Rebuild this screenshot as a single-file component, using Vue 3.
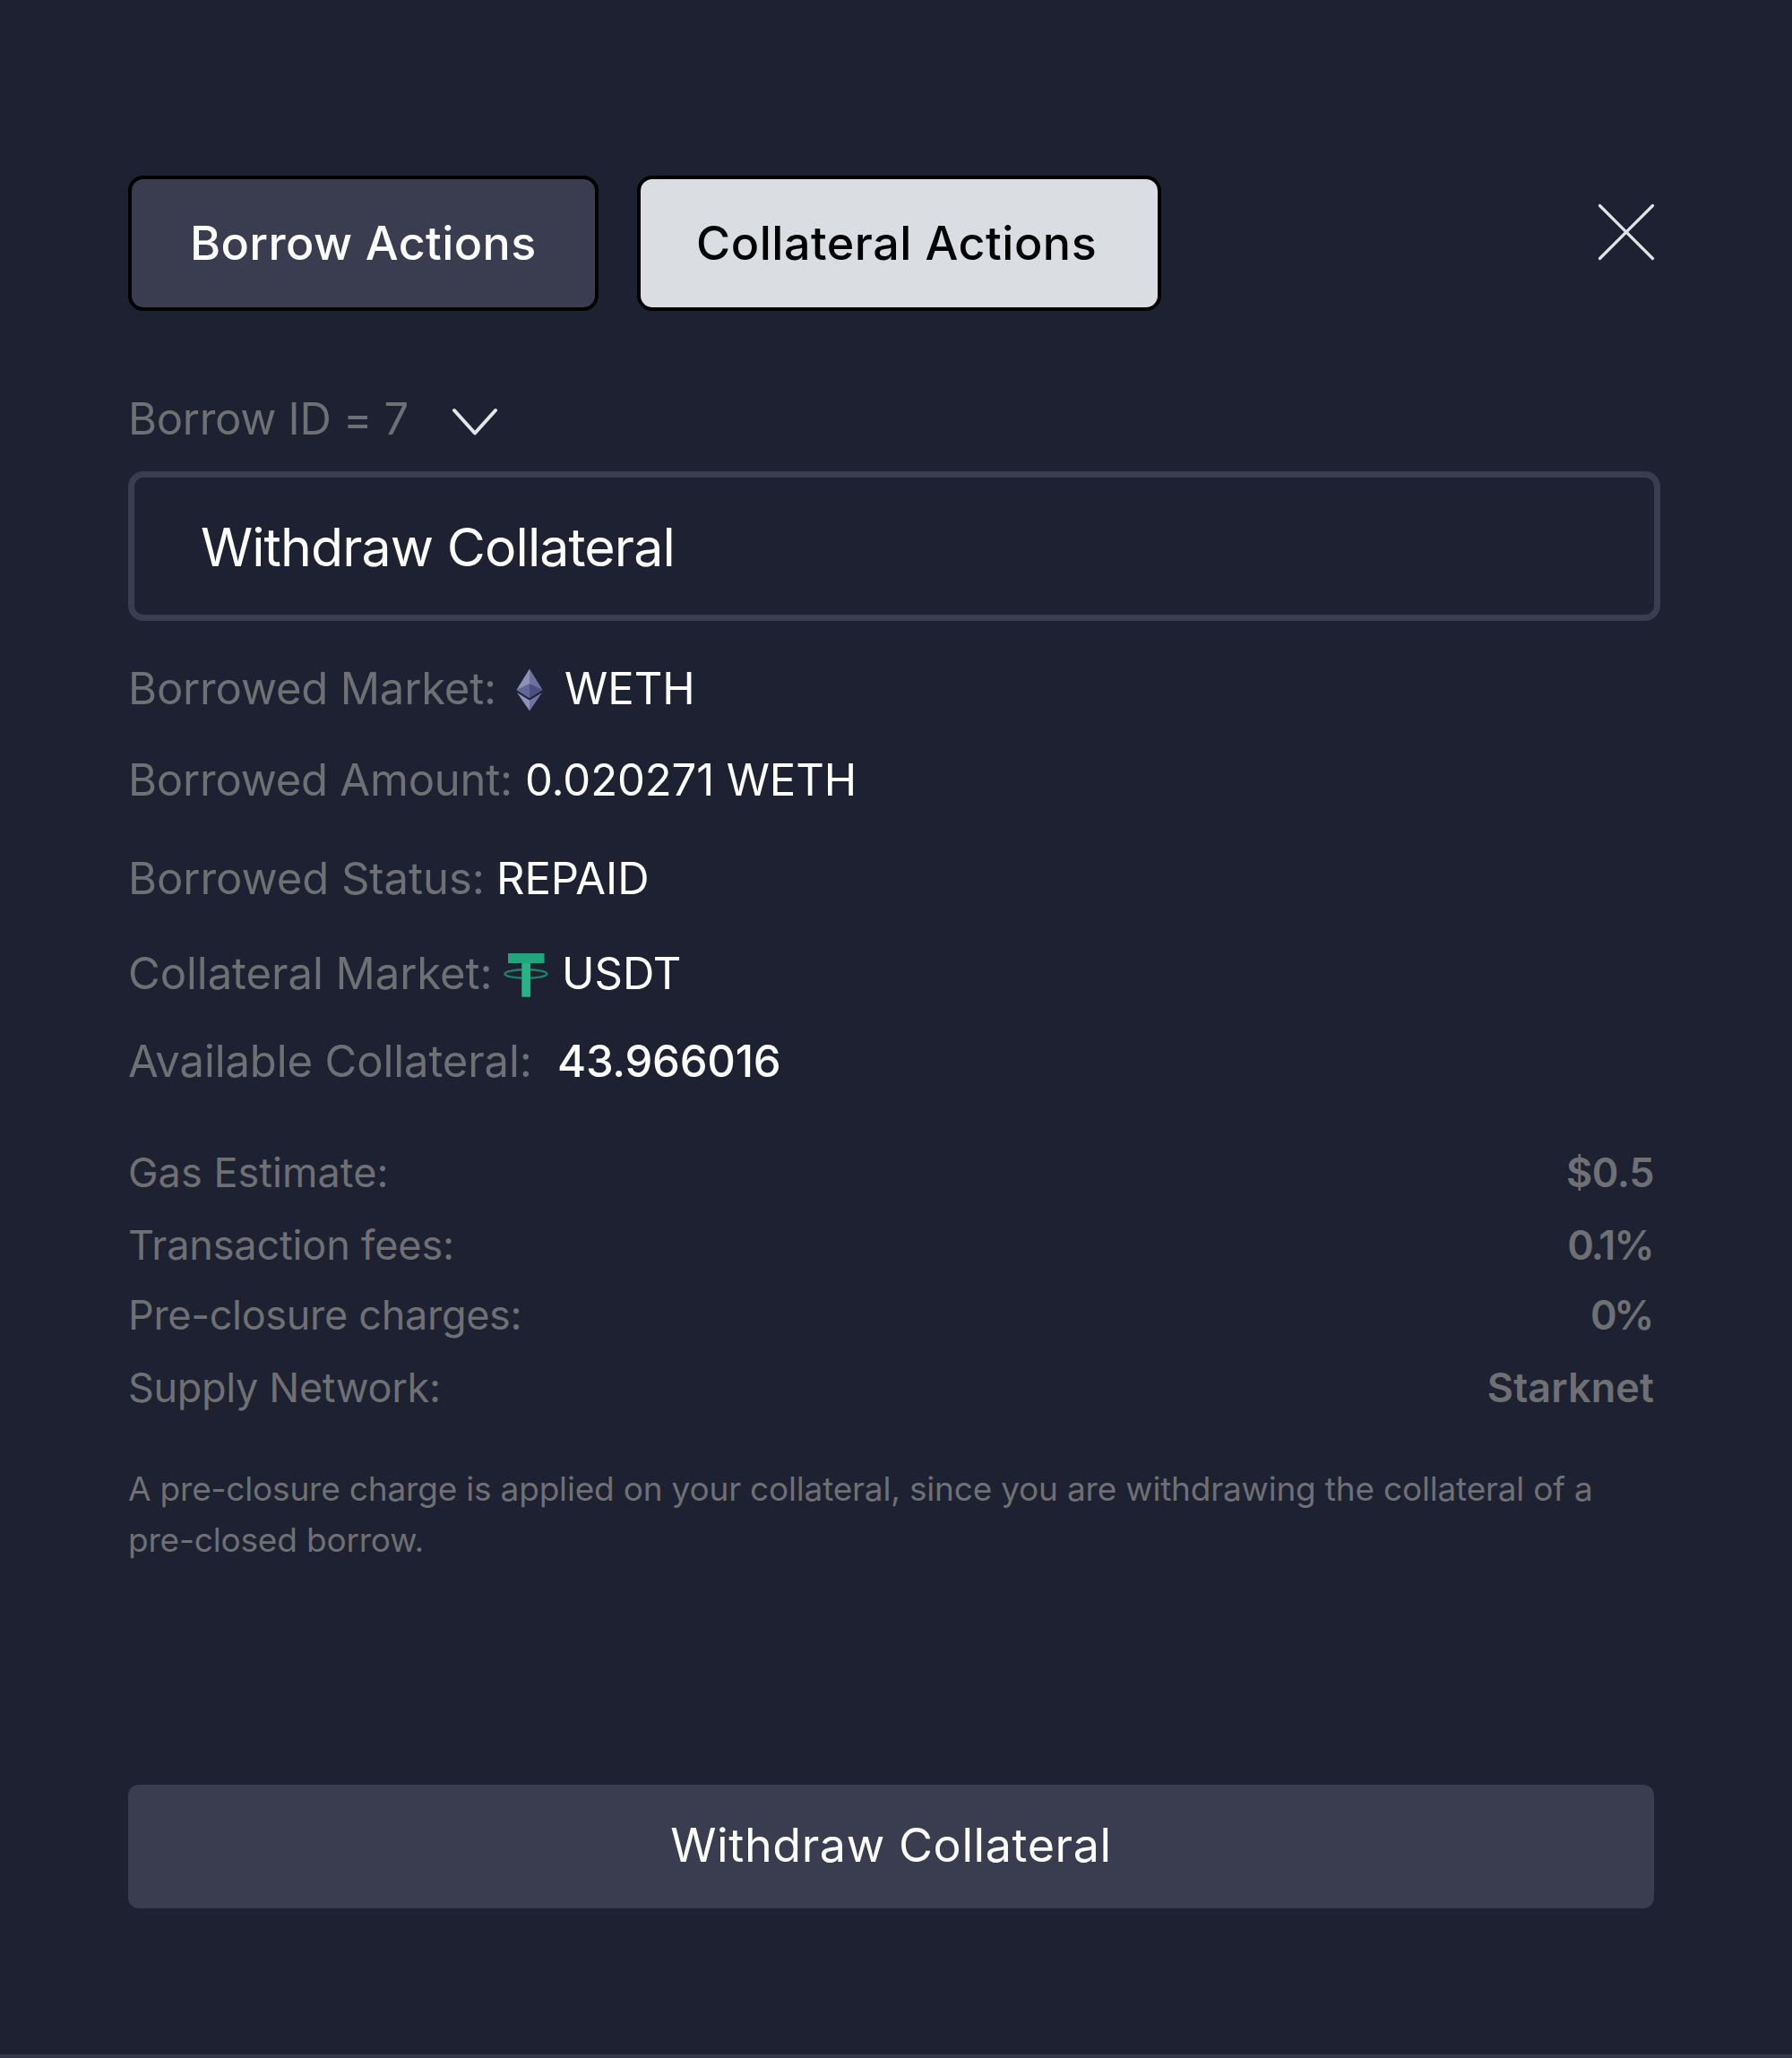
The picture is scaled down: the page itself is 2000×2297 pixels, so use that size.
<script setup>
import { ref } from 'vue'

const activeTab = ref('collateral')

const charges = [
  { key: 'gas', label: 'Gas Estimate:', value: '$0.5' },
  { key: 'fees', label: 'Transaction fees:', value: '0.1%' },
  { key: 'preclosure', label: 'Pre-closure charges:', value: '0%' },
  { key: 'network', label: 'Supply Network:', value: 'Starknet' },
]
</script>

<template>
  <main class="modal">
    <header class="top">
      <button class="tab borrow" :class="{ active: activeTab === 'borrow' }" @click="activeTab = 'borrow'">Borrow Actions</button>
      <button class="tab collateral" :class="{ active: activeTab === 'collateral' }" @click="activeTab = 'collateral'">Collateral Actions</button>
      <button class="close" aria-label="Close">
        <svg width="64" height="64" viewBox="0 0 64 64" fill="none" stroke="#e2e3e6" stroke-width="3.2" stroke-linecap="round">
          <path d="M2.5 2.5 61.5 61.5M61.5 2.5 2.5 61.5" />
        </svg>
      </button>
    </header>

    <div class="picker">
      <span>Borrow ID = 7</span>
      <svg width="54" height="34" viewBox="0 0 54 34" fill="none" stroke="#e4e5e8" stroke-width="4" stroke-linecap="round" stroke-linejoin="round">
        <path d="M4 4 27 29.5 50 4" />
      </svg>
    </div>

    <div class="field">Withdraw Collateral</div>

    <section class="info">
      <div class="row market">
        <span class="label">Borrowed Market:</span>
        <svg class="eth" width="32" height="50" viewBox="0 0 32 50">
          <path fill="#8d93b8" d="M16 1.5 1.5 25 16 34Z" />
          <path fill="#6d729c" d="M16 1.5 30.5 25 16 34Z" />
          <path fill="#62679a" d="M16 18 1.5 25 16 34Z" />
          <path fill="#4b4f80" d="M16 18 30.5 25 16 34Z" />
          <path fill="#8d93b8" d="M2 28 16 36.5V48.5Z" />
          <path fill="#70759f" d="M30 28 16 36.5V48.5Z" />
        </svg>
        <span class="value">WETH</span>
      </div>
      <div class="row amount">
        <span class="label">Borrowed Amount:</span>
        <span class="value">0.020271 WETH</span>
      </div>
      <div class="row status">
        <span class="label">Borrowed Status:</span>
        <span class="value">REPAID</span>
      </div>
      <div class="row backing">
        <span class="label">Collateral Market:</span>
        <svg class="usdt" width="52" height="50" viewBox="0 0 52 50">
          <path fill="#20a67d" d="M6 1H46.5V12H31V49.5H21.5V12H6Z" />
          <ellipse cx="26" cy="24" rx="23.5" ry="4.7" fill="none" stroke="#1d8266" stroke-width="2.4" />
          <path fill="#22b585" d="M21.5 12H31V49.5H21.5Z" />
        </svg>
        <span class="value">USDT</span>
      </div>
      <div class="row available">
        <span class="label">Available Collateral:</span>
        <span class="value">43.966016</span>
      </div>
    </section>

    <dl class="charges">
      <div v-for="c in charges" :key="c.key" class="charge" :class="c.key">
        <dt>{{ c.label }}</dt>
        <dd>{{ c.value }}</dd>
      </div>
    </dl>

    <p class="note">A pre-closure charge is applied on your collateral, since you are withdrawing the collateral of a pre-closed borrow.</p>

    <button class="submit">Withdraw Collateral</button>
  </main>
</template>

<style>
body {
  margin: 0;
  background: #1e2131;
}
</style>

<style scoped>
.modal {
  box-sizing: border-box;
  width: 2000px;
  height: 2297px;
  padding: 196px 147px 0 143px;
  display: flex;
  flex-direction: column;
  background: #1e2131;
  border-bottom: 4px solid #34374b;
  font-family: Inter, sans-serif;
  color: #6f7073;
}

button {
  box-sizing: border-box;
  margin: 0;
  padding: 0;
  border: 0;
  font-family: inherit;
  white-space: nowrap;
}

.top {
  display: flex;
  height: 151px;
}

.tab {
  height: 151px;
  border: 4px solid #000;
  border-radius: 17px;
  background: #3a3c4f;
  color: #fff;
  font-size: 52px;
  font-weight: 500;
  text-align: left;
}

.tab.active {
  background: #dadde2;
  color: #000;
}

.tab.borrow {
  width: 525px;
  padding-left: 65px;
  letter-spacing: 0.4px;
}

.tab.collateral {
  width: 585px;
  margin-left: 43px;
  padding-left: 62px;
  letter-spacing: 0.55px;
}

.close {
  width: 64px;
  height: 64px;
  margin: 31px 0 0 487px;
  background: none;
}

.close svg {
  display: block;
}

.picker {
  display: flex;
  align-items: center;
  height: 60px;
  margin-top: 90px;
  font-size: 49px;
  letter-spacing: -0.3px;
}

.picker span {
  width: 360px;
}

.picker svg {
  margin-top: 7px;
}

.field {
  box-sizing: border-box;
  width: 1710px;
  height: 167px;
  margin-top: 29px;
  padding-left: 74px;
  border: 7px solid #3a3c4f;
  border-radius: 17px;
  color: #fff;
  font-size: 59px;
  line-height: 155px;
  letter-spacing: -0.9px;
}

.info {
  display: flex;
  flex-direction: column;
  margin-top: 46px;
}

.row {
  display: flex;
  align-items: center;
  height: 60px;
  font-size: 49px;
  line-height: 60px;
  white-space: nowrap;
}

.label {
  flex: none;
}

.value {
  color: #fff;
}

.market .label {
  width: 432px;
  letter-spacing: -0.18px;
}

.eth {
  margin: 2px 23px 0 0;
}

.amount {
  margin-top: 42px;
}

.amount .label {
  width: 443px;
  letter-spacing: -0.22px;
}

.amount .value {
  letter-spacing: -0.1px;
}

.status {
  margin-top: 50px;
}

.status .label {
  width: 411px;
  letter-spacing: -0.05px;
}

.status .value {
  letter-spacing: -0.1px;
}

.backing {
  margin-top: 46px;
}

.backing .label {
  width: 418px;
  letter-spacing: -0.06px;
}

.usdt {
  margin: 1px 14px 0 0;
}

.available {
  margin-top: 38px;
}

.available .label {
  width: 479px;
  letter-spacing: -0.12px;
}

.available .value {
  font-weight: 500;
  letter-spacing: -0.25px;
}

.charges {
  margin: 69px 0 0;
  width: 1703px;
}

.charge {
  display: flex;
  justify-content: space-between;
  height: 50px;
  font-size: 45px;
  line-height: 50px;
}

.charge dd {
  margin: 0;
  font-weight: 600;
}

.gas {
  letter-spacing: 0.05px;
}

.gas dd {
  letter-spacing: -0.5px;
}

.fees {
  margin-top: 31px;
  letter-spacing: -0.15px;
}

.fees dd {
  margin-right: 1px;
  letter-spacing: -1.8px;
}

.preclosure {
  margin-top: 28px;
  letter-spacing: -0.3px;
}

.preclosure dd {
  margin-right: 3px;
  letter-spacing: -3.5px;
}

.network {
  margin-top: 31px;
  letter-spacing: -0.33px;
}

.network dd {
  letter-spacing: 0.1px;
}

.note {
  width: 1660px;
  margin: 59px 0 0;
  font-size: 37px;
  line-height: 57px;
  letter-spacing: -0.19px;
}

.submit {
  width: 1703px;
  height: 138px;
  margin-top: 245px;
  padding-bottom: 4px;
  border-radius: 12px;
  background: #3a3c4f;
  color: #fff;
  font-size: 52px;
  font-weight: 400;
  letter-spacing: 0.6px;
}
</style>
